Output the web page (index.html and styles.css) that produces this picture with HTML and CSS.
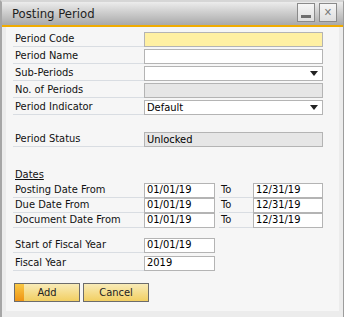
FILE: index.html
```html
<!DOCTYPE html>
<html lang="en">
<head>
    <meta charset="UTF-8">
    <title>Posting Period</title>
    <link rel="stylesheet" href="styles.css">
</head>
<body>
    <div class="window">
        <div class="titlebar">
            <span class="title">Posting Period</span>
            <span class="tb-btn tb-min"><span class="min-bar"></span></span>
            <span class="tb-btn tb-close">&#x2715;</span>
        </div>

        <div class="panel">
            <div class="rows top-rows">
                <div class="row">
                    <span class="label">Period Code</span>
                    <span class="field yellow"></span>
                </div>
                <div class="row">
                    <span class="label">Period Name</span>
                    <span class="field"></span>
                </div>
                <div class="row">
                    <span class="label">Sub-Periods</span>
                    <span class="field select"><span class="arrow"></span></span>
                </div>
                <div class="row">
                    <span class="label">No. of Periods</span>
                    <span class="field grey"></span>
                </div>
                <div class="row">
                    <span class="label">Period Indicator</span>
                    <span class="field select">Default<span class="arrow"></span></span>
                </div>
                <div class="row status-row">
                    <span class="label">Period Status</span>
                    <span class="field grey">Unlocked</span>
                </div>
            </div>

            <div class="dates-title">Dates</div>
            <div class="rows date-rows">
                <div class="row date-row">
                    <span class="label">Posting Date From</span>
                    <span class="field">01/01/19</span>
                    <span class="label to">To</span>
                    <span class="field">12/31/19</span>
                </div>
                <div class="row date-row">
                    <span class="label">Due Date From</span>
                    <span class="field">01/01/19</span>
                    <span class="label to">To</span>
                    <span class="field">12/31/19</span>
                </div>
                <div class="row date-row">
                    <span class="label">Document Date From</span>
                    <span class="field">01/01/19</span>
                    <span class="label to">To</span>
                    <span class="field">12/31/19</span>
                </div>
            </div>

            <div class="rows fiscal-rows">
                <div class="row date-row">
                    <span class="label">Start of Fiscal Year</span>
                    <span class="field">01/01/19</span>
                </div>
                <div class="row date-row">
                    <span class="label">Fiscal Year</span>
                    <span class="field">2019</span>
                </div>
            </div>

            <div class="actions">
                <button class="btn btn-add">Add</button>
                <button class="btn">Cancel</button>
            </div>
        </div>
    </div>
</body>
</html>
```

FILE: styles.css
```css
* {
    box-sizing: border-box;
    margin: 0;
    padding: 0;
}

body {
    font-family: 'DejaVu Sans Condensed', 'DejaVu Sans', sans-serif;
    font-size: 11px;
    color: #111;
    background: #ececec;
    width: 344px;
    height: 317px;
    overflow: hidden;
}

.window {
    height: 330px;
    background: #ececec;
    border: 1px solid #9c9c9c;
    border-top: 2px solid #d6d6d6;
    border-left: 2px solid #a6a6a6;
}

.titlebar {
    height: 25px;
    display: flex;
    align-items: center;
    padding: 0 6px 0 10px;
    background: linear-gradient(to bottom, #ececec, #a9a9a9);
    border-bottom: 2px solid #f0ab00;
}

.title {
    flex: 1;
    font-size: 13px;
    color: #1e1e1e;
    padding-bottom: 1px;
}

.tb-btn {
    width: 18px;
    height: 19px;
    margin-left: 4px;
    margin-bottom: 2px;
    border: 1px solid #8a8a8a;
    background: linear-gradient(to bottom, #f6f6f6, #dedede);
    display: flex;
    align-items: center;
    justify-content: center;
    color: #7a7a7a;
    font-size: 11px;
    font-weight: bold;
}

.tb-min {
    align-items: flex-end;
    padding-bottom: 3px;
}

.min-bar {
    width: 10px;
    height: 3px;
    background: #6e6e6e;
}

.panel {
    margin: 0 4px 0 4px;
    height: 284px;
    background: #f6f6f6;
    padding: 5px 6px 0 7px;
}

.rows {
    display: flex;
    flex-direction: column;
    gap: 2px;
}

.row {
    display: grid;
    grid-template-columns: 131px 179px;
    height: 15px;
}

.label {
    padding-left: 2px;
    line-height: 14px;
    border-bottom: 1px solid #d9dde2;
    white-space: nowrap;
}

.field {
    position: relative;
    background: #fff;
    border: 1px solid #b4b4b4;
    line-height: 13px;
    padding-left: 2px;
    color: #000;
}

.field.yellow {
    background: #fff0a2;
}

.field.grey {
    background: #e6e6e6;
}

.arrow {
    position: absolute;
    right: 4px;
    top: 4px;
    width: 0;
    height: 0;
    border-left: 4px solid transparent;
    border-right: 4px solid transparent;
    border-top: 5px solid #222;
}

.status-row {
    margin-top: 15px;
}

.dates-title {
    margin-top: 21px;
    padding-left: 2px;
    height: 15px;
    line-height: 14px;
    text-decoration: underline;
}

.date-rows {
    gap: 1px;
}

.date-row {
    grid-template-columns: 131px 71px 38px 70px;
    column-gap: 0;
    height: 14px;
}

.date-row .field {
    line-height: 12px;
}

.date-row .label.to {
    margin-left: 4px;
    padding-left: 2px;
}

.fiscal-rows {
    margin-top: 11px;
    gap: 3px;
}

.fiscal-rows .date-row {
    height: 15px;
}

.actions {
    display: flex;
    gap: 3px;
    margin-top: 12px;
    padding-left: 1px;
}

.btn {
    width: 66px;
    height: 19px;
    font-family: inherit;
    font-size: 11px;
    color: #222;
    border: 1px solid #6c6c6c;
    background: linear-gradient(to bottom, #f8ebb8, #f2cf62);
}

.btn-add {
    background: linear-gradient(to bottom, #f9c844, #ef9414) left / 9px 100% no-repeat,
                linear-gradient(to bottom, #f8ebb8, #f2cf62);
}
```
